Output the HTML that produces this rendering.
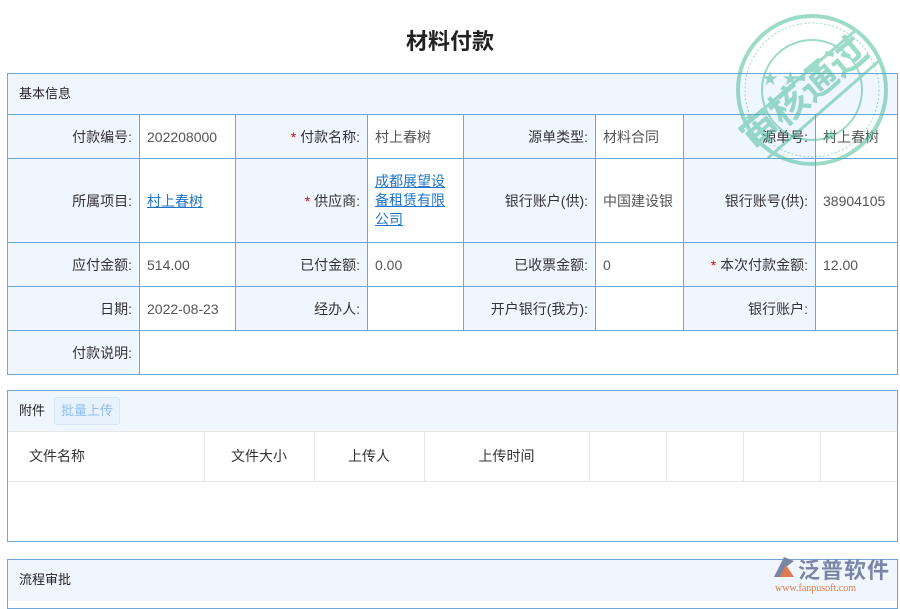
<!DOCTYPE html>
<html><head><meta charset="utf-8"><style>
*{margin:0;padding:0;box-sizing:border-box}
body{width:900px;height:600px;overflow:hidden;background:#fff;font-family:"Liberation Sans","Noto Sans CJK SC",sans-serif;font-size:14px;color:#333;position:relative}
.a{position:absolute}
h1{position:absolute;top:24px;left:0;width:900px;text-align:center;font-size:22px;font-weight:bold;color:#222}
.box{position:absolute;left:7px;width:891px;border:1px solid #6fa6d8;overflow:hidden}
.hd{background:#f0f6fe;height:41px;line-height:40px;padding-left:11px;font-size:13px;color:#222}
table{border-collapse:collapse;table-layout:fixed;width:891px;margin-left:-1px}
td{border:1px solid #6fa6d8;font-size:14px;padding:0 7px}
td.l{background:#f0f6fe;text-align:right;color:#333}
td.v{color:#555}
.r{color:#e00}
a{color:#1f73c8;text-decoration:underline}
.ft td{border:1px solid #e6e6e6;border-top:none;background:#fff;font-size:14px;color:#333}
</style></head><body>
<h1>材料付款</h1>
<div class="box" style="top:73px;height:302px">
<div class="hd" style="border-bottom:1px solid #6fa6d8">基本信息</div>
<table style="margin-top:-1px">
<colgroup><col style="width:132px"><col style="width:96px"><col style="width:132px"><col style="width:96px"><col style="width:132px"><col style="width:88px"><col style="width:132px"><col style="width:83px"></colgroup>
<tr style="height:44px"><td class="l">付款编号:</td><td class="v">202208000</td><td class="l"><span class="r">* </span>付款名称:</td><td class="v">村上春树</td><td class="l">源单类型:</td><td class="v">材料合同</td><td class="l">源单号:</td><td class="v">村上春树</td></tr>
<tr style="height:84px"><td class="l">所属项目:</td><td class="v"><a>村上春树</a></td><td class="l"><span class="r">* </span>供应商:</td><td class="v" style="line-height:19px"><a>成都展望设备租赁有限公司</a></td><td class="l">银行账户(供):</td><td class="v">中国建设银</td><td class="l">银行账号(供):</td><td class="v">38904105</td></tr>
<tr style="height:44px"><td class="l">应付金额:</td><td class="v">514.00</td><td class="l">已付金额:</td><td class="v">0.00</td><td class="l">已收票金额:</td><td class="v">0</td><td class="l"><span class="r">* </span>本次付款金额:</td><td class="v">12.00</td></tr>
<tr style="height:44px"><td class="l">日期:</td><td class="v">2022-08-23</td><td class="l">经办人:</td><td class="v"></td><td class="l">开户银行(我方):</td><td class="v"></td><td class="l">银行账户:</td><td class="v"></td></tr>
<tr style="height:44px"><td class="l">付款说明:</td><td class="v" colspan="7"></td></tr>
</table>
</div>
<div class="box" style="top:390px;height:152px">
<div class="hd" style="border-bottom:1px solid #e6e6e6">附件<span style="display:inline-block;margin-left:9px;height:28px;line-height:26px;padding:0 6px;border:1px solid #d5e6f7;background:#e8f2fd;color:#8fbff0;border-radius:3px;vertical-align:middle;position:relative;top:-1px">批量上传</span></div>
<table class="ft"><colgroup><col style="width:197px"><col style="width:110px"><col style="width:110px"><col style="width:165px"><col style="width:77px"><col style="width:77px"><col style="width:77px"><col style="width:78px"></colgroup>
<tr style="height:49px"><td style="padding-left:22px;border-left:none">文件名称</td><td style="text-align:center">文件大小</td><td style="text-align:center">上传人</td><td style="text-align:center">上传时间</td><td></td><td></td><td></td><td style="border-right:none"></td></tr></table>
</div>
<div class="box" style="top:559px;height:50px"><div class="hd">流程审批</div></div>
<svg class="a" style="left:732px;top:12px" width="160" height="160" viewBox="0 0 160 160" opacity="0.5">
<g fill="none" stroke="#3db894"><circle cx="80" cy="78" r="74" stroke-width="4"/><circle cx="80" cy="78" r="67" stroke-width="1" stroke-dasharray="2 2"/><circle cx="80" cy="78" r="50" stroke-width="2"/>
<line x1="14" y1="112" x2="124" y2="18" stroke-width="3"/><line x1="36" y1="146" x2="148" y2="48" stroke-width="3"/></g>
<text x="0" y="0" transform="translate(22,140) rotate(-40)" font-size="38" font-weight="bold" fill="#3db894" font-family="Noto Sans CJK SC,sans-serif">审核通过</text>
<text x="30" y="72" font-size="16" fill="#3db894">★ ★</text><text x="92" y="128" font-size="14" fill="#3db894">★</text>
</svg>
<div class="a" style="left:770px;top:553px;width:124px">
<svg class="a" style="left:0;top:2px" width="28" height="26"><path d="M4 22 L14 2 L24 6 L16 12 L22 22 Z" fill="#7b86a6"/><path d="M10 22 L16 10 L24 22Z" fill="#e07b4d"/></svg>
<div class="a" style="left:28px;top:0;font-size:22px;font-weight:bold;color:#7b86a6;letter-spacing:1px;white-space:nowrap">泛普软件</div>
<div class="a" style="left:5px;top:30px;font-size:10px;color:#e07b4d;font-family:'Liberation Serif',serif;white-space:nowrap">www.fanpusoft.com</div>
</div>
</body></html>
